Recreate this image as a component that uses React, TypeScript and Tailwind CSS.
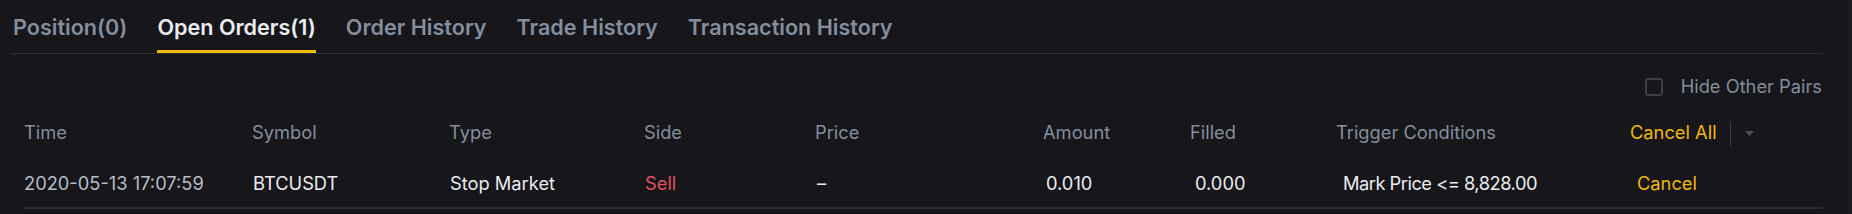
import { useState } from "react";

const tabs = ["Position(0)", "Open Orders(1)", "Order History", "Trade History", "Transaction History"];

const cols = [
  { label: "Time", w: "w-[228px]" },
  { label: "Symbol", w: "w-[197px]" },
  { label: "Type", w: "w-[195px]" },
  { label: "Side", w: "w-[171px]" },
  { label: "Price", w: "w-[228px]" },
  { label: "Amount", w: "w-[147px]" },
  { label: "Filled", w: "w-[146px]" },
  { label: "Trigger Conditions", w: "w-[294px]" },
];

export default function App() {
  const [active] = useState(1);

  return (
    <div className="flex h-[214px] w-full bg-[#16161b] font-['Inter',sans-serif]">
      <div className="flex-1 flex flex-col">
        {/* Tabs */}
        <div className="ml-[11px] mr-[25px] flex h-[54px] gap-[30px] border-b border-[#2b2c33] pl-[2px]">
          {tabs.map((t, i) => (
            <div
              key={t}
              className={`flex h-full items-center border-b-[3px] pt-[5px] text-[21.6px] font-semibold ${
                i === active ? "border-[#f0b90b] text-[#eaecef]" : "border-transparent text-[#848e9c]"
              }`}
            >
              {t}
            </div>
          ))}
        </div>

        {/* Hide other pairs */}
        <div className="mr-[26px] flex h-[64px] items-center justify-end gap-[18px] pt-[1px]">
          <div className="h-[18px] w-[18px] rounded-[3px] border-2 border-[#3b3e46]" />
          <span className="text-[18.3px] text-[#848e9c]">Hide Other Pairs</span>
        </div>

        {/* Table */}
        <div className="ml-[24px] mr-[25px] text-[18.3px]">
          <div className="flex h-[30px] items-center text-[#848e9c]">
            {cols.map((c) => (
              <div key={c.label} className={c.w}>
                {c.label}
              </div>
            ))}
            <div className="flex items-center">
              <span className="text-[#f0b90b]">Cancel All</span>
              <span className="ml-[13px] h-[25px] w-px bg-[#3b3e46]" />
              <svg className="ml-[14px]" width="9" height="5" viewBox="0 0 9 5">
                <path d="M0 0h9L4.5 5z" fill="#474d57" />
              </svg>
            </div>
          </div>
          <div className="flex h-[61px] items-center border-b-2 border-[#2b2c33] pt-[13px] text-[#eaecef]">
            <div className={`${cols[0].w} text-[#b7bdc6]`}>2020-05-13 17:07:59</div>
            <div className={`${cols[1].w} pl-[1px]`}>BTCUSDT</div>
            <div className={`${cols[2].w} pl-[1px]`}>Stop Market</div>
            <div className={`${cols[3].w} pl-[1px] text-[#e0525b]`}>Sell</div>
            <div className={`${cols[4].w} pl-[2px]`}>–</div>
            <div className={`${cols[5].w} pl-[3px]`}>0.010</div>
            <div className={`${cols[6].w} pl-[5px]`}>0.000</div>
            <div className={`${cols[7].w} pl-[7px] tracking-[-0.5px]`}>Mark Price &lt;= 8,828.00</div>
            <div className="pl-[7px] text-[#f0b90b]">Cancel</div>
          </div>
        </div>
      </div>
      <div className="w-[4px] bg-[#1c1c22]" />
    </div>
  );
}
